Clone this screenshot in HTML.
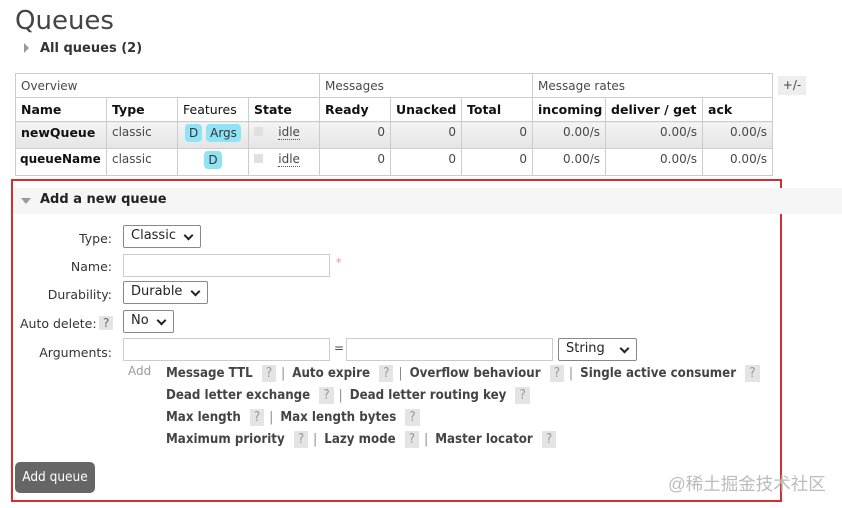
<!DOCTYPE html>
<html><head><meta charset="utf-8"><style>
*{margin:0;padding:0;box-sizing:border-box}
body{width:842px;height:508px;background:#fff;font-family:"DejaVu Sans","Liberation Sans",sans-serif;font-size:12px;color:#484848;position:relative;overflow:hidden}
.a{position:absolute;white-space:nowrap}
table{position:absolute;left:15px;top:73px;border-collapse:collapse;width:758px;table-layout:fixed}
td{border:1px solid #ccc;padding:0 5px;height:24px;font-size:12px;white-space:nowrap;overflow:hidden}
.h td{font-weight:bold;color:#111;font-size:12.5px}
.r td{background:linear-gradient(#f4f4f4,#e4e4e4);height:27px;vertical-align:top;padding-top:3px}
.r2 td{background:#fff;height:27px;vertical-align:top;padding-top:3px}
.n{text-align:right}
.badge{display:inline-block;background:#8fe3f5;color:#333;border-radius:4px;padding:2px 4px;font-size:12px;margin-top:2px}
.lab{position:absolute;text-align:right;width:100px;left:12px;color:#333;font-size:12.5px}
.sel{position:absolute;border:1px solid #888;border-radius:2px;height:23px;font-size:13px;color:#222;padding:2px 7px;background:#fff}
.sel:after{content:"";position:absolute;right:8px;top:6px;width:5px;height:5px;border-right:2px solid #222;border-bottom:2px solid #222;transform:rotate(45deg)}
.inp{position:absolute;border:1px solid #ccc;height:23px;background:#fff}
.q{display:inline-block;background:#e4e4e4;color:#999;padding:1px 4px;font-weight:normal;margin:0 5px}
.lk{position:absolute;font-family:"DejaVu Sans Condensed","DejaVu Sans",sans-serif;font-weight:bold;font-size:13.2px;color:#444;white-space:nowrap}
.sep{color:#888;font-weight:normal;margin-right:3px}
</style></head><body>
<div class="a" style="left:15px;top:6px;font-size:26px;color:#444">Queues</div>
<div class="a" style="left:24px;top:43px;width:0;height:0;border-left:5px solid #999;border-top:5px solid transparent;border-bottom:5px solid transparent"></div>
<div class="a" style="left:40px;top:41px;font-weight:bold;font-size:13px;color:#333">All queues (2)</div>
<table>
<colgroup><col style="width:91px"><col style="width:71px"><col style="width:71px"><col style="width:71px"><col style="width:71px"><col style="width:71px"><col style="width:71px"><col style="width:73px"><col style="width:97px"><col></colgroup>
<tr><td colspan="4">Overview</td><td colspan="3">Messages</td><td colspan="3">Message rates</td></tr>
<tr class="h"><td>Name</td><td>Type</td><td style="font-weight:normal">Features</td><td>State</td><td>Ready</td><td>Unacked</td><td>Total</td><td>incoming</td><td>deliver / get</td><td>ack</td></tr>
<tr class="r"><td style="font-weight:bold;color:#111;font-size:12.5px">newQueue</td><td>classic</td><td style="text-align:center;padding:0"><span class="badge">D</span> <span class="badge">Args</span></td><td><span style="display:inline-block;width:9px;height:9px;background:#e0e0e0"></span> &nbsp; &nbsp;<span style="border-bottom:1px dotted #555">idle</span></td><td class="n">0</td><td class="n">0</td><td class="n">0</td><td class="n">0.00/s</td><td class="n">0.00/s</td><td class="n">0.00/s</td></tr>
<tr class="r2"><td style="font-weight:bold;color:#111;font-size:12px;padding:3px 4px 0">queueName</td><td>classic</td><td style="text-align:center;padding:0"><span class="badge">D</span></td><td><span style="display:inline-block;width:9px;height:9px;background:#e0e0e0"></span> &nbsp; &nbsp;<span style="border-bottom:1px dotted #555">idle</span></td><td class="n">0</td><td class="n">0</td><td class="n">0</td><td class="n">0.00/s</td><td class="n">0.00/s</td><td class="n">0.00/s</td></tr>
</table>
<div class="a" style="left:778px;top:76px;width:28px;height:19px;background:#eee;font-size:12px;text-align:center;line-height:19px">+/-</div>
<div class="a" style="left:11px;top:179px;width:771px;height:323px;border:2px solid #d03030"></div>
<div class="a" style="left:13px;top:188px;width:829px;height:26px;background:#f6f6f6"></div>
<div class="a" style="left:21px;top:198px;width:0;height:0;border-top:6px solid #999;border-left:5px solid transparent;border-right:5px solid transparent"></div>
<div class="a" style="left:40px;top:192px;font-weight:bold;font-size:13px;color:#222">Add a new queue</div>
<div class="lab" style="top:231px">Type:</div>
<div class="sel" style="left:123px;top:225px;width:78px">Classic</div>
<div class="lab" style="top:259px">Name:</div>
<div class="inp" style="left:123px;top:254px;width:207px"></div>
<div class="a" style="left:336px;top:256px;color:#e88;font-size:11px">*</div>
<div class="lab" style="top:287px">Durability:</div>
<div class="sel" style="left:123px;top:281px;width:85px">Durable</div>
<div class="a" style="left:20px;top:316px;color:#333;font-size:12.5px">Auto delete:</div>
<div class="a" style="left:99px;top:316px;background:#e4e4e4;color:#666;padding:0 4px;font-size:12px">?</div>
<div class="sel" style="left:123px;top:310px;width:51px">No</div>
<div class="lab" style="top:345px">Arguments:</div>
<div class="inp" style="left:123px;top:338px;width:207px"></div>
<div class="a" style="left:334px;top:341px">=</div>
<div class="inp" style="left:346px;top:338px;width:207px"></div>
<div class="sel" style="left:558px;top:338px;width:79px">String</div>
<div class="a" style="left:128px;top:364px;color:#999;font-size:12px">Add</div>
<div class="lk" style="left:166px;top:365px">Message TTL <span class="q">?</span><span class="sep">|</span> Auto expire <span class="q">?</span><span class="sep">|</span> Overflow behaviour <span class="q">?</span><span class="sep">|</span> Single active consumer <span class="q">?</span></div>
<div class="lk" style="left:166px;top:387px">Dead letter exchange <span class="q">?</span><span class="sep">|</span> Dead letter routing key <span class="q">?</span></div>
<div class="lk" style="left:166px;top:409px">Max length <span class="q">?</span><span class="sep">|</span> Max length bytes <span class="q">?</span></div>
<div class="lk" style="left:166px;top:431px">Maximum priority <span class="q">?</span><span class="sep">|</span> Lazy mode <span class="q">?</span><span class="sep">|</span> Master locator <span class="q">?</span></div>
<div class="a" style="left:15px;top:462px;width:80px;height:31px;background:#666;border-radius:5px;color:#fff;font-family:'DejaVu Sans Condensed','DejaVu Sans',sans-serif;font-size:13.5px;text-align:center;line-height:31px">Add queue</div>
<div class="a" style="left:668px;top:471px;color:#bbb;font-size:17.5px;font-family:'Liberation Sans','Noto Sans CJK SC',sans-serif">@稀土掘金技术社区</div>
</body></html>
